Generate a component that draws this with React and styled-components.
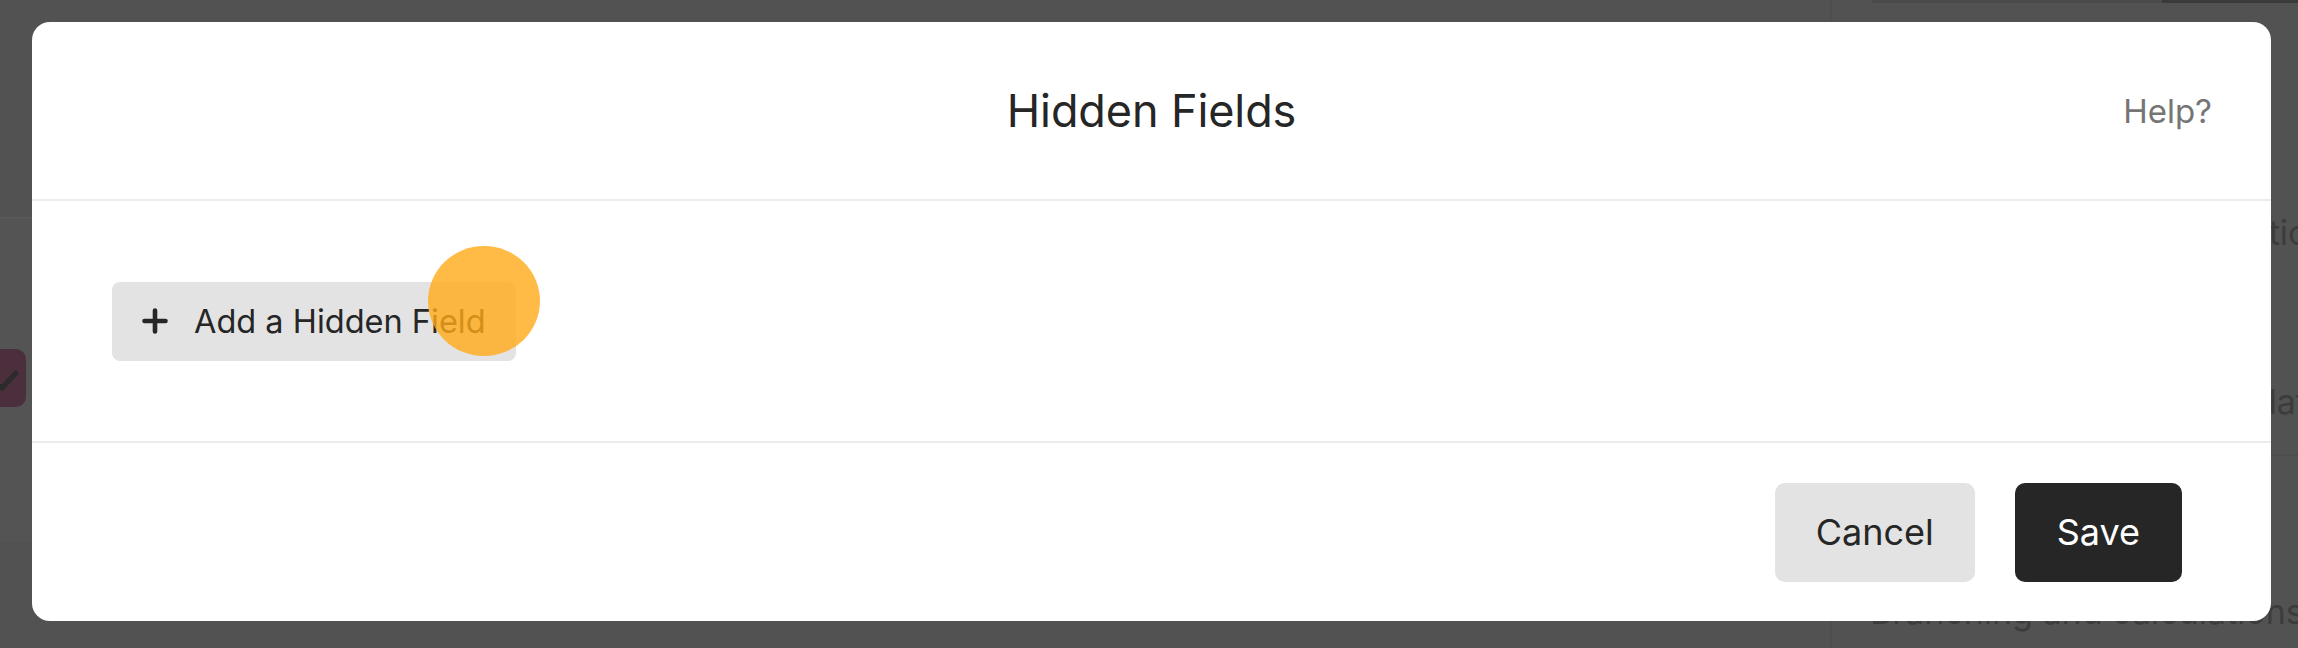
import React from "react";
import styled, { createGlobalStyle } from "styled-components";

const Global = createGlobalStyle`
  html, body { margin: 0; padding: 0; }
  body {
    width: 2298px;
    height: 648px;
    overflow: hidden;
    font-family: Inter, "Noto Sans", "Liberation Sans", sans-serif;
    background: #525252;
  }
  * { box-sizing: border-box; }
`;

const Page = styled.div`
  position: relative;
  width: 2298px;
  height: 648px;
  overflow: hidden;
  background: #525252;
  display: grid;
  grid-template-columns: 1830px 1fr;
`;

/* ---------- dimmed page behind the dialog ---------- */
const LeftPane = styled.div`
  display: flex;
  flex-direction: column;
  padding-top: 217px;
`;

const LeftCard = styled.div`
  height: 325px;
  border-top: 2px solid #585858;
  background: #545454;
  display: flex;
  align-items: center;
  padding-bottom: 20px;
`;

const CheckBox = styled.div`
  width: 26px;
  height: 58px;
  margin-top: 14px;
  border-radius: 0 10px 10px 0;
  background: #4b2f3c;
  display: flex;
  align-items: center;
  justify-content: flex-start;
  overflow: hidden;
`;

const RightPane = styled.div`
  display: flex;
  flex-direction: column;
  border-left: 2px solid #4e4e4e;
`;

const TopStrip = styled.div`
  height: 3px;
  display: grid;
  grid-template-columns: 290px 1fr;
  margin-left: 40px;
`;

const StripPart = styled.div`
  background: ${(p) => p.$c};
`;

const GhostText = styled.div`
  font-size: 34px;
  color: #3c3c3c;
  white-space: nowrap;
  padding-left: ${(p) => p.$indent || 0}px;
  margin-top: ${(p) => p.$top || 0}px;
  line-height: 40px;
`;

const GhostRule = styled.div`
  height: 2px;
  background: #4d4d4d;
  margin-top: ${(p) => p.$top || 0}px;
`;

/* ---------- dialog ---------- */
const Overlay = styled.div`
  position: absolute;
  inset: 0;
  padding: 22px 27px 27px 32px;
  display: flex;
`;

const Dialog = styled.div`
  flex: 1;
  background: #ffffff;
  border-radius: 18px;
  display: flex;
  flex-direction: column;
  overflow: hidden;
`;

const Header = styled.div`
  height: 179px;
  flex-shrink: 0;
  border-bottom: 2px solid #ececec;
  display: grid;
  grid-template-columns: 1fr auto 1fr;
  align-items: center;
  padding: 0 59px;
`;

const Title = styled.h1`
  grid-column: 2;
  margin: 0;
  font-size: 45px;
  font-weight: 400;
  color: #262626;
  letter-spacing: -0.1px;
`;

const HelpLink = styled.a`
  grid-column: 3;
  justify-self: end;
  font-size: 33px;
  color: #757575;
  text-decoration: none;
`;

const Body = styled.div`
  height: 242px;
  flex-shrink: 0;
  border-bottom: 2px solid #ececec;
  display: flex;
  align-items: center;
  padding: 0 80px;
`;

const AddWrap = styled.div`
  position: relative;
  display: inline-flex;
`;

const AddButton = styled.button`
  height: 79px;
  border: none;
  border-radius: 8px;
  background: #e3e3e3;
  color: #262626;
  font-family: inherit;
  font-size: 32.5px;
  display: inline-flex;
  align-items: center;
  gap: 26px;
  padding: 0 30px 0 30px;
  cursor: pointer;
`;

const TouchDot = styled.span`
  position: absolute;
  left: 316px;
  top: -36px;
  width: 112px;
  height: 110px;
  border-radius: 50%;
  background: rgba(255, 170, 22, 0.8);
  pointer-events: none;
`;

const Footer = styled.div`
  flex: 1;
  display: flex;
  align-items: center;
  justify-content: flex-end;
  gap: 40px;
  padding: 0 89px 0 0;
`;

const ActionButton = styled.button`
  height: 99px;
  border: none;
  border-radius: 10px;
  padding: 0 ${(p) => (p.$primary ? 42 : 41)}px;
  font-family: inherit;
  font-size: 36px;
  background: ${(p) => (p.$primary ? "#262626" : "#e3e3e3")};
  color: ${(p) => (p.$primary ? "#ffffff" : "#262626")};
  cursor: pointer;
`;

const PlusIcon = () => (
  <svg width="26" height="26" viewBox="0 0 26 26" aria-hidden="true">
    <path
      d="M13 2.5v21M2.5 13h21"
      stroke="#262626"
      strokeWidth="4.6"
      strokeLinecap="round"
      fill="none"
    />
  </svg>
);

const CheckMark = () => (
  <svg width="26" height="58" viewBox="0 0 26 58" aria-hidden="true">
    <path d="M-6 34 L2 39 L16 24" stroke="#2b2b2b" strokeWidth="5" fill="none" strokeLinecap="round" />
  </svg>
);

export default function App() {
  return (
    <>
      <Global />
      <Page>
        <LeftPane>
          <LeftCard>
            <CheckBox>
              <CheckMark />
            </CheckBox>
          </LeftCard>
        </LeftPane>
        <RightPane>
          <TopStrip>
            <StripPart $c="#4a4a4a" />
            <StripPart $c="#3a3a3a" />
          </TopStrip>
          <GhostText $indent={346} $top={210}>Analytics</GhostText>
          <GhostText $indent={343} $top={129}>Metadata</GhostText>
          <GhostRule $top={32} />
          <GhostText $indent={38} $top={136}>Branching and calculations</GhostText>
        </RightPane>
        <Overlay>
          <Dialog role="dialog" aria-label="Hidden Fields">
            <Header>
              <Title>Hidden Fields</Title>
              <HelpLink href="#">Help?</HelpLink>
            </Header>
            <Body>
              <AddWrap>
                <AddButton>
                  <PlusIcon />
                  Add a Hidden Field
                </AddButton>
                <TouchDot />
              </AddWrap>
            </Body>
            <Footer>
              <ActionButton>Cancel</ActionButton>
              <ActionButton $primary>Save</ActionButton>
            </Footer>
          </Dialog>
        </Overlay>
      </Page>
    </>
  );
}
